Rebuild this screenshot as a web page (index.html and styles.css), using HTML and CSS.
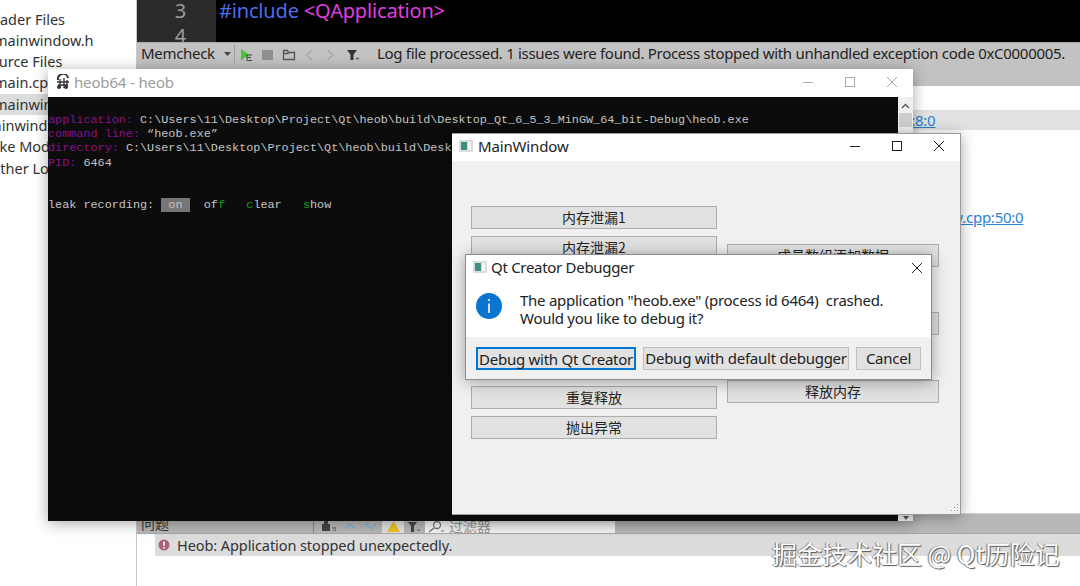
FILE: index.html
```html
<!DOCTYPE html>
<html lang="zh-CN">
<head>
<meta charset="utf-8">
<title>heob crash</title>
<link rel="stylesheet" href="styles.css">
</head>
<body>
<div class="desktop">
  <div class="ide">
    <aside class="tree">
      <div class="node off-a">Header Files</div>
      <div class="node off-b">mainwindow.h</div>
      <div class="node off-c">Source Files</div>
      <div class="node off-b">main.cpp</div>
      <div class="node off-b selected">mainwindow.cpp</div>
      <div class="node off-d">mainwindow.ui</div>
      <div class="node off-e">CMake Modules</div>
      <div class="node off-f">Other Locations</div>
    </aside>
    <main class="work">
      <section class="editor">
        <div class="gutter"><span>3</span><span>4</span></div>
        <div class="code"><span class="kw">#include</span> <span class="inc">&lt;QApplication&gt;</span></div>
      </section>
      <section class="toolbar">
        <span class="tool-name">Memcheck</span>
        <svg class="ic-drop" width="7" height="4" viewBox="0 0 7 4"><path d="M0 0h7L3.500 4z" fill="#444"/></svg>
        <span class="sep"></span>
        <svg class="tb-ic" width="14" height="12" viewBox="0 0 14 12"><path d="M1 0l8 5.500-8 6z" fill="#4cc23a"/><path d="M7 6h5M7 6v5.500h5M7 8.500h4" stroke="#444" fill="none"/></svg>
        <svg class="tb-ic" width="14" height="12" viewBox="0 0 14 12"><rect x="1" y="1" width="11" height="10" fill="#8f8f8f"/></svg>
        <svg class="tb-ic" width="14" height="12" viewBox="0 0 14 12"><path d="M1.500 1.500h4l1 2h6v7h-11zM1.500 4.500h5" fill="none" stroke="#555" stroke-width="1.300"/></svg>
        <svg class="tb-ic" width="14" height="12" viewBox="0 0 14 12"><path d="M9 1L3.500 6 9 11" fill="none" stroke="#a8a8a8" stroke-width="1.400"/></svg>
        <svg class="tb-ic" width="14" height="12" viewBox="0 0 14 12"><path d="M3.500 1L9 6l-5.500 5" fill="none" stroke="#a8a8a8" stroke-width="1.400"/></svg>
        <svg class="tb-ic" width="14" height="12" viewBox="0 0 14 12"><path d="M2 1h10L8.500 5.500V11h-3V5.500z" fill="#333"/><path d="M11 9.500h3" stroke="#555" stroke-width="1.500"/></svg>
        <span class="log">Log file processed. 1 issues were found. Process stopped with unhandled exception code 0xC0000005.</span>
      </section>
      <section class="output">
        <div class="out-row"><a class="link first">main.cpp:8:0</a></div>
        <div class="out-row plain"><a class="link second">mainwindow.cpp:50:0</a></div>
      </section>
      <section class="problems">
        <span class="prob-title">问题</span>
        <span class="prob-sep"></span>
        <svg class="pb-a" width="14" height="10" viewBox="0 0 14 10"><path d="M0 3h8v7H0zM2 3V0h4v3" fill="#444"/><path d="M10 7h4v3h-4" fill="none" stroke="#555"/></svg>
        <svg class="pb-b" width="12" height="7" viewBox="0 0 12 7"><path d="M1 6l5-5 5 5" fill="none" stroke="#7fb2d6" stroke-width="1.500"/></svg>
        <svg class="pb-c" width="12" height="7" viewBox="0 0 12 7"><path d="M1 1l5 5 5-5" fill="none" stroke="#7fb2d6" stroke-width="1.500"/></svg>
        <span class="warn"><svg width="13" height="11" viewBox="0 0 13 11"><path d="M6.500 0L13 11H0z" fill="#f0c020"/></svg></span>
        <svg class="pb-d" width="12" height="11" viewBox="0 0 12 11"><path d="M0 1h9L6 5v6H3V5z" fill="#444"/><path d="M9 9h3" stroke="#555"/></svg>
        <span class="filter">
          <svg width="16" height="12" viewBox="0 0 16 12"><circle cx="9" cy="4" r="3.500" fill="none" stroke="#777" stroke-width="1.300"/><path d="M6 7l-5 4" stroke="#777" stroke-width="1.500"/><path d="M13 10h3" stroke="#777"/></svg>
          <span class="filter-text">过滤器</span>
        </span>
      </section>
      <section class="issue">
        <div class="issue-row">
          <svg width="12" height="12" viewBox="0 0 12 12"><circle cx="6" cy="6" r="5.500" fill="#a8627e"/><path d="M6 2.500v4.200M6 8v1.500" stroke="#fff" stroke-width="1.600"/></svg>
          <span>Heob: Application stopped unexpectedly.</span>
        </div>
      </section>
    </main>
  </div>

  <div class="win heob">
    <header class="titlebar">
      <svg class="heob-ic" width="16" height="16" viewBox="0 0 16 16"><path d="M3 6a5 5 0 0 1 10-2" fill="none" stroke="#333" stroke-width="2"/><path d="M2 8h12M3 11h10M5 5v9M9 4v10M12 6v7" stroke="#333" stroke-width="1.300"/><circle cx="4" cy="13" r="2" fill="#333"/><circle cx="11" cy="13" r="2" fill="#333"/></svg>
      <span class="title dim">heob64 - heob</span>
      <span class="controls">
        <svg width="10" height="10" viewBox="0 0 10 10"><path d="M0 5.500h10" stroke="#aaa"/></svg>
        <svg width="10" height="10" viewBox="0 0 10 10"><rect x=".5" y=".5" width="9" height="9" fill="none" stroke="#aaa"/></svg>
        <svg width="10" height="10" viewBox="0 0 10 10"><path d="M0 0l10 10M10 0L0 10" stroke="#aaa"/></svg>
      </span>
    </header>
    <div class="con-body">
<pre class="console"><span class="lab">application:</span> C:\Users\11\Desktop\Project\Qt\heob\build\Desktop_Qt_6_5_3_MinGW_64_bit-Debug\heob.exe
<span class="lab">command line:</span> “heob.exe”
<span class="lab">directory:</span> C:\Users\11\Desktop\Project\Qt\heob\build\Desktop_Qt_6_5_3_MinGW_64_bit-Debug
<span class="lab">PID:</span> 6464


leak recording: <span class="on"> on </span>  of<span class="g">f</span>   <span class="g">c</span>lear   <span class="g">s</span>how</pre>
      <div class="scroll">
        <svg width="9" height="6" viewBox="0 0 9 6"><path d="M1 5l3.500-3.500L8 5" fill="none" stroke="#555" stroke-width="1.400"/></svg>
        <span class="thumb"></span>
        <span class="scroll-fill"></span>
        <svg width="6" height="4" viewBox="0 0 6 4"><path d="M0 0h6L3 4z" fill="#555"/></svg>
      </div>
    </div>
  </div>

  <div class="win mainwin">
    <header class="titlebar">
      <svg class="app-ic" width="14" height="12" viewBox="0 0 14 12"><rect width="14" height="12" fill="#d8dcdc"/><rect x="2" y="2" width="6" height="8" fill="#3f8f7f"/><rect x="9" y="2" width="3" height="8" fill="#f4f4f4"/></svg>
      <span class="title">MainWindow</span>
      <span class="controls">
        <svg width="10" height="10" viewBox="0 0 10 10"><path d="M0 5.500h10" stroke="#222"/></svg>
        <svg width="10" height="10" viewBox="0 0 10 10"><rect x=".5" y=".5" width="9" height="9" fill="none" stroke="#222"/></svg>
        <svg width="10" height="10" viewBox="0 0 10 10"><path d="M0 0l10 10M10 0L0 10" stroke="#222"/></svg>
      </span>
    </header>
    <div class="main-body">
      <div class="col col-left">
        <button class="qbtn">内存泄漏1</button>
        <button class="qbtn">内存泄漏2</button>
        <button class="qbtn"></button>
        <button class="qbtn"></button>
        <button class="qbtn"></button>
        <button class="qbtn"></button>
        <button class="qbtn">重复释放</button>
        <button class="qbtn">抛出异常</button>
      </div>
      <div class="col col-right">
        <button class="qbtn">成员数组添加数据</button>
        <button class="qbtn"></button>
        <button class="qbtn">释放内存</button>
      </div>
    </div>
    <svg class="grip" width="10" height="10" viewBox="0 0 10 10"><path d="M8 1h1v1H8zM5 4h1v1H5zM8 4h1v1H8zM2 7h1v1H2zM5 7h1v1H5zM8 7h1v1H8z" fill="#9a9a9a"/></svg>
  </div>

  <div class="win dialog">
    <header class="titlebar dlg-title">
      <svg class="app-ic" width="14" height="12" viewBox="0 0 14 12"><rect width="14" height="12" fill="#d8dcdc"/><rect x="2" y="2" width="6" height="8" fill="#3f8f7f"/><rect x="9" y="2" width="3" height="8" fill="#f4f4f4"/></svg>
      <span class="title">Qt Creator Debugger</span>
      <svg class="dlg-x" width="10" height="10" viewBox="0 0 10 10"><path d="M0 0l10 10M10 0L0 10" stroke="#222"/></svg>
    </header>
    <div class="dlg-msg">
      <svg class="info" width="26" height="26" viewBox="0 0 26 26"><circle cx="13" cy="13" r="13" fill="#0a74d0"/><path d="M13 6v2M13 10.500V20" stroke="#fff" stroke-width="1.600"/></svg>
      <p class="msg">The application "heob.exe" (process id 6464)&nbsp; crashed.<br>Would you like to debug it?</p>
    </div>
    <div class="dlg-btns">
      <button class="dbtn focus b1">Debug with Qt Creator</button>
      <button class="dbtn b2">Debug with default debugger</button>
      <button class="dbtn b3">Cancel</button>
    </div>
  </div>

  <div class="watermark">掘金技术社区 @ Qt历险记</div>
</div>
</body>
</html>
```
FILE: styles.css
```css
* { box-sizing: border-box; }
html, body { margin: 0; padding: 0; }
body { font-family: "Noto Sans", "Noto Sans CJK SC", sans-serif; background: #fff; color: #222; }
.desktop { position: relative; width: 1080px; height: 586px; overflow: hidden; }

/* IDE behind the windows */
.ide { display: flex; height: 100%; }
.tree { width: 137px; flex: none; padding-top: 8.500px; border-right: 1px solid #c8c8c8; overflow: hidden; background: #fff; }
.node { height: 21.300px; line-height: 21.300px; font-size: 14.500px; white-space: nowrap; color: #333; }
.node.selected { background: #dcdcdc; }
.off-a { text-indent: -19px; }
.off-b { text-indent: -6px; }
.off-c { text-indent: -18px; }
.off-d { text-indent: -20px; }
.off-e { text-indent: -31px; }
.off-f { text-indent: -11px; }
.work { flex: 1; min-width: 0; display: flex; flex-direction: column; }

.editor { height: 42px; display: flex; background: #000; overflow: hidden; }
.gutter { width: 79px; background: #2b2b2b; color: #9c9c9c; font-size: 20px; line-height: 25px; text-align: center; display: flex; flex-direction: column; padding: 0 0 0 8px; margin-top: -2px; }
.code { padding-left: 3px; margin-top: -1px; font-size: 20px; line-height: 23px; letter-spacing: -0.17px; color: #fff; white-space: nowrap; }
.kw { color: #4f6ce8; }
.inc { color: #e03ee0; }

.toolbar { height: 44px; background: #c2c2c2; display: flex; align-items: flex-start; padding: 0 0 0 4px; border-top: 1px solid #a8a8a8; font-size: 15px; letter-spacing: -0.3px; color: #222; }
.tool-name { line-height: 20px; width: 83px; }
.ic-drop { margin-top: 9px; }
.sep { width: 1px; height: 18px; background: #a0a0a0; margin: 2px 5px 0 3px; }
.tb-ic { margin: 6px 7px 0 0; flex: none; }
.log { margin-left: 11px; line-height: 20px; white-space: nowrap; }

.output { flex: 1; background: #fff; padding-top: 24px; }
.out-row { height: 20px; background: #e2e2e2; line-height: 20px; font-size: 15px; letter-spacing: -0.25px; }
.out-row.plain { background: none; margin-top: 77px; }
.link { color: #2a82da; text-decoration: underline; display: inline-block; }
.first { margin-left: 711px; }
.second { margin-left: 738px; }

.problems { height: 21px; background: #b8b8b8; position: relative; display: flex; align-items: flex-end; border-top: 1px solid #d0d0d0; border-bottom: 1px solid #a8a8a8; font-size: 14px; }
.prob-title { margin-left: 4px; width: 172px; line-height: 18px; color: #333; }
.prob-sep { width: 1px; height: 13px; background: #888; }
.pb-a { margin: 0 0 2px 8px; }
.pb-b { margin: 0 0 3px 8px; }
.pb-c { margin: 0 0 3px 9px; }
.warn { width: 22px; height: 14px; background: #e4e4e4; margin-left: 5px; display: flex; align-items: center; justify-content: center; }
.pb-d { margin: 0 0 1px 4px; }
.filter { width: 190px; height: 13px; margin-left: 5px; background: #f6f6f6; display: flex; align-items: center; overflow: visible; padding-left: 3px; }
.filter-text { margin-left: 5px; color: #999; line-height: 13px; }

.issue { height: 52px; background: #fff; }
.issue-row { margin-left: 18px; height: 22px; background: #dcdcdc; display: flex; align-items: center; padding-left: 3px; gap: 7px; font-size: 14.500px; letter-spacing: -0.08px; color: #333; }

/* Windows */
.win { position: absolute; background: #f0f0f0; box-shadow: 0 2px 14px rgba(0,0,0,.35); }
.titlebar { height: 28px; padding-bottom: 2px; background: #fff; display: flex; align-items: center; position: relative; }
.title { font-size: 15px; letter-spacing: -0.15px; color: #222; white-space: nowrap; }
.title.dim { color: #9c9c9c; }
.controls { margin-left: auto; display: flex; gap: 32px; padding-right: 16px; }

.heob { left: 48px; top: 69px; width: 865px; height: 452px; display: flex; flex-direction: column; }
.heob-ic { margin: 0 3px 0 7px; }
.con-body { flex: 1; display: flex; min-height: 0; background: #0c0c0c; }
.console { flex: 1; margin: 0; padding-top: 16px; font-family: "Liberation Mono", monospace; font-size: 11.800px; line-height: 14.200px; color: #c4c4c4; white-space: pre; overflow: hidden; }
.lab { color: #8a0f8a; }
.on { background: #767676; }
.g { color: #13a10e; }
.scroll { width: 15px; flex: none; background: #f0f0f0; display: flex; flex-direction: column; align-items: center; padding: 6px 0 1px; }
.thumb { width: 13px; height: 14px; background: #cdcdcd; margin-top: 4px; }
.scroll-fill { flex: 1; }

.mainwin { left: 452px; top: 133px; width: 509px; height: 382px; display: flex; flex-direction: column; border: 1px solid #9a9a9a; border-left: 0; }
.mainwin .titlebar { height: 27px; padding-bottom: 3px; }
.app-ic { margin: 0 5px 0 7px; }
.main-body { flex: 1; display: flex; gap: 10px; padding-left: 19px; }
.col { display: flex; flex-direction: column; }
.col-left { width: 246px; padding-top: 45px; gap: 7px; }
.col-right { width: 212px; padding-top: 83px; gap: 45px; }
.qbtn { height: 23px; padding: 0 0 3px; border: 1px solid #adadad; background: #e1e1e1; font-family: "Noto Sans CJK SC", "Noto Sans", sans-serif; font-size: 14px; line-height: 20px; color: #222; }
.grip { position: absolute; right: 1px; bottom: 1px; }

.dialog { left: 465px; top: 254px; width: 467px; height: 126px; background: #fff; border: 1px solid #8c8c8c; display: flex; flex-direction: column; }
.dlg-title { height: 26px; }
.dialog .title { letter-spacing: -0.3px; }
.dialog .app-ic { margin-right: 4px; }
.dlg-x { position: absolute; right: 9px; top: 8px; }
.dlg-msg { height: 56px; display: flex; padding: 12px 0 0 10px; }
.msg { margin: 0 0 0 18px; font-size: 15px; letter-spacing: -0.27px; line-height: 18px; color: #222; white-space: nowrap; position: relative; top: -2px; }
.dlg-btns { flex: 1; background: #f0f0f0; padding: 10px 0 0 10px; display: flex; }
.dbtn { height: 23px; padding: 0 0 6px; border: 1px solid #c0c0c0; background: #e1e1e1; font-family: "Noto Sans", sans-serif; font-size: 15px; letter-spacing: -0.25px; line-height: 20px; color: #222; white-space: nowrap; }
.dbtn.focus { border: 2px solid #0078d7; }
.b1 { width: 160px; }
.b2 { width: 206px; margin-left: 7px; }
.b3 { width: 65px; margin-left: 7px; }

.watermark { position: absolute; left: 772px; top: 535px; font-family: "Noto Sans CJK SC", sans-serif; font-size: 25px; line-height: 36px; color: #fff; text-shadow: 1px 1px 1px #555, -1px 0 1px #777; white-space: nowrap; }
```
